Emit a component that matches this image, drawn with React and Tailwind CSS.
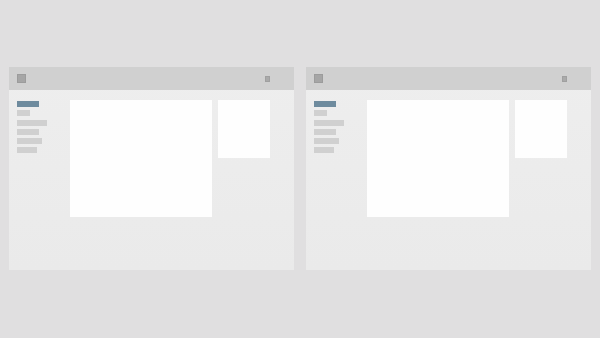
const navWidths = [22, 13, 30, 22, 25, 20];

const Window = () => (
  <div className="flex w-[285px] h-[203px] flex-col bg-gradient-to-b from-[#eeeeee] to-[#eaeaea]">
    <header className="flex h-[23px] items-center justify-between bg-[#d0d0d0] pl-[8px] pr-[24px]">
      <div className="h-[9px] w-[9px] border border-[#9c9c9c] bg-[#a6a6a6]" />
      <div className="h-[6px] w-[5px] border border-[#a0a0a0] bg-[#aaaaaa]" />
    </header>
    <div className="flex pl-[8px] pt-[10px]">
      <nav className="mt-[1px] flex w-[53px] flex-col gap-[3.3px]">
        {navWidths.map((w, i) => (
          <div
            key={i}
            className={i === 0 ? "h-[6px] bg-[#6e8b9e]" : "h-[6px] bg-[#d0d0d0]"}
            style={{ width: w }}
          />
        ))}
      </nav>
      <div className="h-[117px] w-[142px] bg-[#fefefe]" />
      <div className="ml-[6px] h-[58px] w-[52px] bg-[#fefefe]" />
    </div>
  </div>
);

const App = () => {
  return (
    <div className="flex h-[338px] w-[600px] gap-[12px] bg-[#e0dfe0] px-[9px] pt-[67px]">
      <Window />
      <Window />
    </div>
  );
};

export default App;
